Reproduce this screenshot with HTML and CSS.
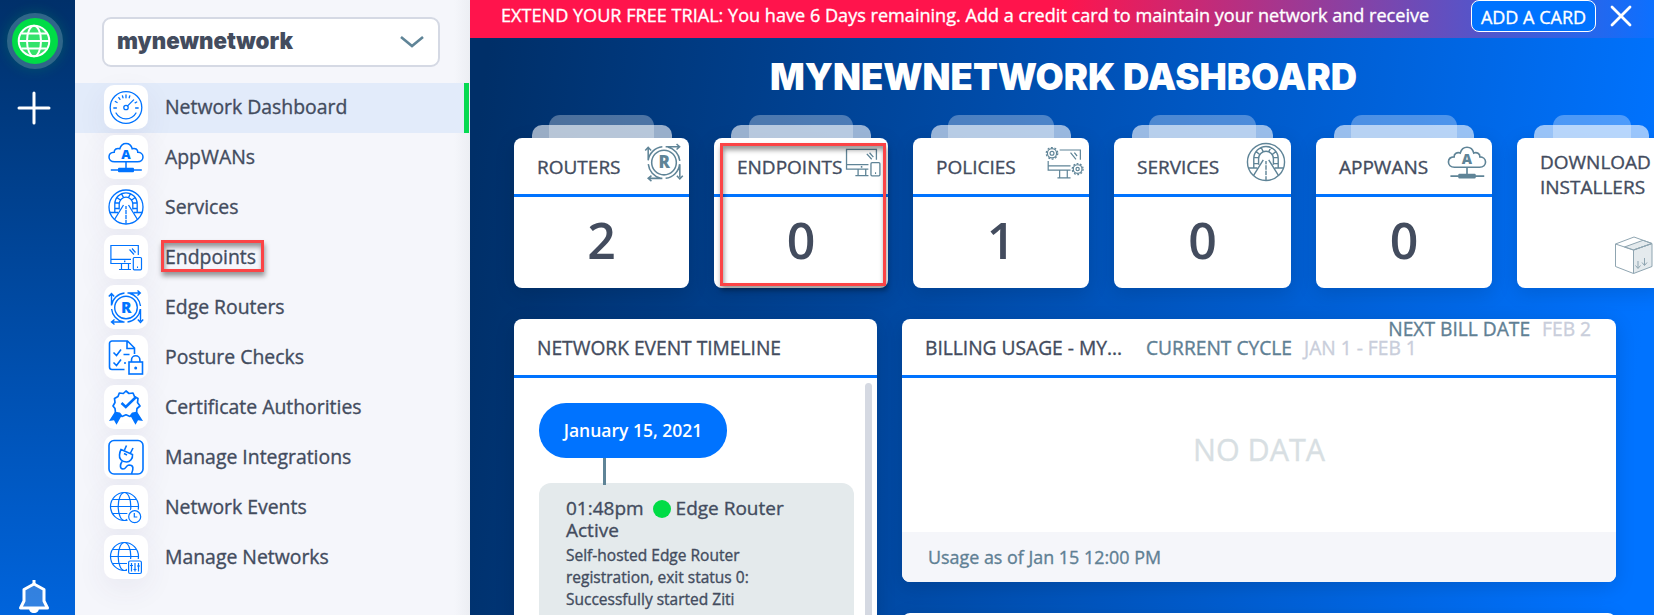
FILE: index.html
```html
<!DOCTYPE html>
<html lang="en">
<head>
<meta charset="utf-8">
<title>Network Dashboard</title>
<link rel="stylesheet" href="styles.css">
</head>
<body>
<svg class="sprite" width="0" height="0">
  <symbol id="gauge" viewBox="0 0 44 44"><g fill="none" stroke="currentColor" stroke-width="1.3" stroke-linecap="round"><circle cx="22" cy="22.5" r="15.8"/><circle cx="22" cy="22.5" r="2.2"/><path d="M23.6 20.9l6-6M12 28a11.5 11.5 0 0 0 20 0M9.8 23h2.6M31.6 23h2.6M11.3 16.5l1.8 1M14.8 12.6l1.2 1.8M18.4 10.8l.6 2M22 10v2.8M25.8 10.8l-.6 2M32.7 17l-1.6.8"/></g></symbol>
  <symbol id="cloud" viewBox="0 0 44 44"><path fill="none" stroke="currentColor" stroke-width="1.5" d="M10.5 26.8C7 26.8 5 24.500 5 22c0-3 2.400-4.600 5.200-4.700-.2-3 2.800-4.600 5.600-3.500 1-3.400 3.400-5.300 6.200-5.300s5.400 2 6.200 5.300c2.800-1.200 5.800.6 5.600 3.500 2.800 0 5.200 1.900 5.200 4.700 0 2.500-2 4.800-5.500 4.800zM22 27v6M6.800 35h31"/><rect x="14" y="32.700" width="16" height="4.500" rx="1" fill="currentColor"/><text class="glyph" x="22" y="23.500" font-size="13">A</text></symbol>
  <symbol id="tunnel" viewBox="0 0 44 44"><g fill="none" stroke="currentColor" stroke-width="1.300"><circle cx="22" cy="22" r="17"/><path d="M10.800 27V19a11.200 11.200 0 0 1 22.400 0v8M15.200 24.500V19a6.800 6.800 0 0 1 13.600 0v5.500M10.800 18h4.400M28.800 18h4.400M10.800 23.500h4.400M28.800 23.500h4.400M13 12.500l3.500 2.800M31 12.500l-3.500 2.800M17.500 8.600l2 4M26.500 8.600l-2 4M5.500 27.500h8.500M30 27.500h8.500M19.500 20L10.500 34.500M24.500 20l9 14.500M22 21v17.500"/><path stroke="#fff" stroke-width="1.600" d="M22 24v1M22 29v1M22 34v1"/></g></symbol>
  <symbol id="devices" viewBox="0 0 44 44"><g fill="none" stroke="currentColor" stroke-width="1.200"><path d="M34.300 20V10.500H6.900v18h20M7 24.400h20M17.500 28.500v6M24.500 28.500v6M15 34.500h12M25.500 14.500l4.500 5M28 13.500l3.500 4"/><rect x="29.300" y="22.500" width="8.200" height="12.300" rx="1"/><path d="M33 32.300h1M20 26.400h1.400" stroke-width="1.600"/></g></symbol>
  <symbol id="router" viewBox="0 0 44 44"><g fill="none" stroke="currentColor" stroke-width="1.400"><circle cx="22" cy="22.500" r="11.300"/><path d="M20.500 8A14.600 14.600 0 0 0 7.500 20.500V9M23.500 8H36M36.500 21A14.600 14.600 0 0 0 25.500 8.300M36.500 24v12M36.300 24A14.600 14.600 0 0 1 23.500 37M20.500 37H8M19 36.800A14.600 14.600 0 0 1 7.600 24M4.800 11.500L7.500 8.500l2.700 3M33.500 5.500L36.300 8l-2.800 2.500M33.800 34.500l2.700 3 2.700-3M10.500 34.500L7.500 37l3 2.500"/></g><text class="glyph" x="22.300" y="27.800" font-size="15.500">R</text></symbol>
  <symbol id="posture" viewBox="0 0 44 44"><g fill="none" stroke="currentColor" stroke-width="1.600"><path d="M20.500 34.500H8a2.500 2.500 0 0 1-2.500-2.500V8.500A2.500 2.500 0 0 1 8 6h15.500L30.500 13v6M23 6v7.500h7.500M9.500 17.500l3 3 4.500-6M9.500 27.500l3 3 4.500-6M19.500 19.500h6M20 28h2"/><rect x="25" y="27" width="13.500" height="12"/><path d="M27.500 27v-2a4.200 4.200 0 0 1 8.400 0v2"/></g><circle cx="31.700" cy="33" r="1.500" fill="currentColor"/></symbol>
  <symbol id="badge" viewBox="0 0 44 44"><path fill="currentColor" d="M12 25L5 36l5-.8 2.500 4.500L18 30zM32 25l7 11-5-.8-2.500 4.500L26 30z"/><path fill="#fff" stroke="currentColor" stroke-width="1.700" stroke-linejoin="round" d="M22 6l3 2.500 4-.5 1.500 3.500L34 13.500 33.500 17.500 36 21l-3 2.500-.5 4-4 .8L26 31.500l-4-1.700-4 1.700-2.500-3.200-4-.8-.5-4L9 21l2-3.500-.5-4L14 11.500 15.300 8l4 .5z"/><path fill="none" stroke="currentColor" stroke-width="2.500" d="M17.500 18l4.300 4L32 12"/></symbol>
  <symbol id="plug" viewBox="0 0 44 44"><g fill="none" stroke="currentColor" stroke-width="1.600"><rect x="5" y="5.500" width="34" height="33.500" rx="5"/><path d="M17 14.500l11.500 5c.5 4-2.500 7.500-6 7.500-5 0-7.500-3.500-7-7 .2-2.500.7-4 1.500-5.500zM20.500 15l2-4.500M26.500 18l2.500-5M20 18.500l3 1.500M18 26.500c-2 3-2.500 7 1 7.500 3.500 0 2.500-3.500 6-4 5 0 4.500 4 2.500 9"/></g></symbol>
  <symbol id="globe" viewBox="0 0 44 44"><g fill="none" stroke="currentColor" stroke-width="1.200"><circle cx="20.500" cy="21.500" r="14"/><ellipse cx="20.500" cy="21.500" rx="6.300" ry="14"/><path d="M6.500 21.500h28M9 14.500h23M9 28.500h23"/></g></symbol>
  <symbol id="events" viewBox="0 0 44 44"><use href="#globe"/><circle cx="30.700" cy="31.700" r="8" fill="#fff"/><g fill="none" stroke="currentColor" stroke-width="1.200"><circle cx="30.700" cy="31.700" r="6"/><path d="M30.300 28v4h3"/></g></symbol>
  <symbol id="tune" viewBox="0 0 44 44"><use href="#globe"/><path fill="#fff" d="M23 24h17v17H23z"/><g fill="none" stroke="currentColor" stroke-width="1.200"><rect x="24.600" y="26" width="12.800" height="12.500" rx="1.500"/><path d="M27.500 28v8.500M31 28v8.500M34.500 28v8.500M26 30.500h3M29.500 34.500h3M33 31h3"/></g></symbol>
  <symbol id="policy" viewBox="0 0 44 44"><g fill="none" stroke="currentColor" stroke-width="1.100"><path d="M18 11h19v9M7.500 21v8.500H28M7.500 25.500H28M18 29.500v7M25 29.500v7M16 36.500h12M28 13.500l5 6M31.500 13.500l2.500 3"/><circle cx="11" cy="14" r="4.200"/><circle cx="11" cy="14" r="1.800"/><circle cx="11" cy="14" r="5.300" stroke-dasharray="1.800 1.530"/><circle cx="34.500" cy="28.500" r="4"/><circle cx="34.500" cy="28.500" r="1.500"/><circle cx="34.500" cy="28.500" r="5" stroke-dasharray="1.700 1.440"/></g></symbol>
</svg>

<div class="app">
  <nav class="rail">
    <div class="rail-globe"><svg width="34" height="34" viewBox="0 0 34 34" fill="none" stroke="#fff" stroke-width="2"><circle cx="17" cy="17" r="15.300" fill="rgba(255,255,255,.2)"/><ellipse cx="17" cy="17" rx="7" ry="15.300"/><path d="M1.700 17h30.600M4.500 9.500h25M4.500 24.500h25"/></svg></div>
    <svg class="rail-plus" width="34" height="34" viewBox="0 0 34 34" stroke="#fff" stroke-width="3" stroke-linecap="round"><path d="M17 2v30M2 17h30"/></svg>
    <svg class="rail-bell" width="32" height="36" viewBox="0 0 32 36"><path fill="rgba(255,255,255,.2)" stroke="#fff" stroke-width="3" stroke-linejoin="round" d="M16 5L6 10.500V22l-3.500 7h27L26 22V10.500z"/><path fill="#fff" d="M14.500 1h3v5h-3zM11 29h10c0 3-2 5-5 5s-5-2-5-5z"/></svg>
  </nav>

  <aside class="side">
    <div class="picker">
      <svg width="180" height="40"><text class="brand" x="0" y="27" textLength="176" lengthAdjust="spacingAndGlyphs">mynewnetwork</text></svg>
      <svg width="24" height="14" viewBox="0 0 24 14" fill="none" stroke="#5f8497" stroke-width="2.600"><path d="M1 2l11 9 11-9"/></svg>
    </div>
    <ul class="menu">
      <li class="item active"><span class="tile"><svg><use href="#gauge"/></svg></span><span>Network Dashboard</span></li>
      <li class="item"><span class="tile"><svg><use href="#cloud"/></svg></span><span>AppWANs</span></li>
      <li class="item"><span class="tile"><svg><use href="#tunnel"/></svg></span><span>Services</span></li>
      <li class="item"><span class="tile"><svg><use href="#devices"/></svg></span><span>Endpoints</span><i class="mark mark-item"></i></li>
      <li class="item"><span class="tile"><svg><use href="#router"/></svg></span><span>Edge Routers</span></li>
      <li class="item"><span class="tile"><svg><use href="#posture"/></svg></span><span>Posture Checks</span></li>
      <li class="item"><span class="tile"><svg><use href="#badge"/></svg></span><span>Certificate Authorities</span></li>
      <li class="item"><span class="tile"><svg><use href="#plug"/></svg></span><span>Manage Integrations</span></li>
      <li class="item"><span class="tile"><svg><use href="#events"/></svg></span><span>Network Events</span></li>
      <li class="item"><span class="tile"><svg><use href="#tune"/></svg></span><span>Manage Networks</span></li>
    </ul>
  </aside>

  <main class="main">
    <div class="banner">
      <span class="banner-text">EXTEND YOUR FREE TRIAL: You have 6 Days remaining. Add a credit card to maintain your network and receive</span>
      <span class="banner-btn">ADD A CARD</span>
      <svg class="close" width="22" height="22" viewBox="0 0 22 22" stroke="#fff" stroke-width="2.800" stroke-linecap="round"><path d="M2 2l18 18M20 2L2 20"/></svg>
    </div>
    <svg class="title" width="600" height="44"><text class="title-text" x="6" y="36" textLength="587" lengthAdjust="spacingAndGlyphs">MYNEWNETWORK DASHBOARD</text></svg>

    <div class="cards">
      <section class="card"><header><span>ROUTERS</span><svg><use href="#router"/></svg></header><b>2</b></section>
      <section class="card"><header><span>ENDPOINTS</span><svg><use href="#devices"/></svg></header><b>0</b><i class="mark mark-card"></i></section>
      <section class="card"><header><span>POLICIES</span><svg><use href="#policy"/></svg></header><b>1</b></section>
      <section class="card"><header><span>SERVICES</span><svg><use href="#tunnel"/></svg></header><b>0</b></section>
      <section class="card"><header><span>APPWANS</span><svg><use href="#cloud"/></svg></header><b>0</b></section>
      <section class="card download"><p>DOWNLOAD INSTALLERS</p>
        <svg width="40" height="40" viewBox="0 0 40 40" fill="none" stroke="#8fa5b1" stroke-width="1"><path fill="#e4eaed" d="M19.500 14L38 7.500V30.500L19.500 37.500zM10.500 11L29 4.300l9 3.200L19.500 14z"/><path d="M1.500 8L20 1l18 6.500L19.500 14zM1.500 8V30.500l18 7M24 25v7M21.500 29.500l2.500 3 2.500-3M30.500 22v7M28 26.500l2.500 3 2.500-3"/></svg></section>
    </div>

    <div class="panels">
      <section class="panel timeline">
        <header>NETWORK EVENT TIMELINE</header>
        <div class="feed">
          <div class="events">
            <div class="day">January 15, 2021</div>
            <div class="link"></div>
            <article class="event">
              <h3>01:48pm <i class="dot"></i>Edge Router<br>Active</h3>
              <p>Self-hosted Edge Router<br>registration, exit status 0:<br>Successfully started Ziti</p>
            </article>
          </div>
          <div class="scroll"></div>
        </div>
      </section>
      <div class="right">
        <section class="panel billing">
          <header><span class="b-title">BILLING USAGE - MY...</span><span class="b-label">CURRENT CYCLE</span><span class="b-val">JAN 1 - FEB 1</span><span class="next"><span class="b-label">NEXT BILL DATE</span><span class="b-val">FEB 2</span></span></header>
          <div class="empty">NO DATA</div>
          <footer>Usage as of Jan 15 12:00 PM</footer>
        </section>
        <section class="panel following"></section>
      </div>
    </div>
  </main>
</div>
</body>
</html>
```
FILE: styles.css
```css
* { box-sizing: border-box; }
body { margin: 0; height: 615px; overflow: hidden; font-family: "Open Sans", "Noto Sans", sans-serif; font-size: 20px; color: #434c5e; -webkit-text-stroke: .35px currentColor; }
.sprite { display: none; }
.glyph { font-family: "Open Sans", sans-serif; font-weight: 800; text-anchor: middle; fill: currentColor; -webkit-text-stroke: 0; }
.app { display: flex; height: 615px; }

.rail { width: 75px; height: 615px; flex: none; background: linear-gradient(#00306a, #0064dc); display: flex; flex-direction: column; padding: 13px 0 0 7px; }
.rail-globe { width: 56px; height: 56px; border-radius: 50%; border: 5px solid #2f6689; background: #00dc46; display: flex; align-items: center; justify-content: center; padding-right: 2px; box-shadow: 0 0 14px rgba(0, 220, 70, .2); }
.rail-plus { margin: 22px 0 0 10px; }
.rail-bell { margin: auto 0 0 11px; }

.side { width: 395px; flex: none; background: linear-gradient(90deg, #f5f6fb 96%, #eceef3); padding-top: 17px; }
.picker { margin: 0 30px 16px 27px; height: 50px; border: 2px solid #d5d9e4; border-radius: 9px; background: #fff; display: flex; align-items: center; justify-content: space-between; padding: 0 14px 0 13px; }
.brand { font: 900 23px Inter, sans-serif; fill: #434c5e; -webkit-text-stroke: 0; }
.menu { list-style: none; margin: 0; padding: 0; }
.item { position: relative; height: 50px; margin-right: 1px; padding: 0 0 2px 29px; display: flex; align-items: center; gap: 17px; font-size: 19.400px; }
.item > span + span { padding-bottom: 2px; }
.item.active { background: #e2ebfa; border-right: 5px solid #06da52; }
.tile { width: 44px; height: 44px; border-radius: 10px; background: #fff; color: #0073ff; box-shadow: 0 10px 30px rgba(70, 60, 120, .07); }
.tile svg { display: block; width: 44px; height: 44px; }
.mark { position: absolute; border: 3px solid #fb4446; box-shadow: 1px 4px 5px rgba(0, 0, 0, .4), inset 1px 4px 5px rgba(0, 0, 0, .4); }
.mark-item { left: 86px; top: 7px; width: 103px; height: 32px; }
.mark-card { left: 6px; top: 5px; width: 166px; height: 143px; }

.main { flex: 1; min-width: 0; overflow: hidden; background: linear-gradient(98deg, #002f68 2%, #0050b3 48%, #0073ff 96%); }
.banner { height: 38px; display: flex; align-items: flex-start; color: #fff; padding-left: 31px; background: linear-gradient(90deg, #ff144c 50%, #0c70ff 100%); }
.banner-text { width: 970px; font-size: 18.100px; line-height: 31px; white-space: nowrap; }
.banner-btn { width: 125px; height: 32px; border: 1.500px solid #fff; border-radius: 8px; background: #0073ff; font-size: 18px; line-height: 32px; text-align: center; white-space: nowrap; }
.close { margin: 5px 0 0 14px; }
.title { display: block; margin: 16px 0 0 294px; }
.title-text { font: 900 37px Inter, sans-serif; fill: #fff; -webkit-text-stroke: 0; }

.cards { display: grid; grid-template-columns: 175px 174px 176px 177px 176px 148px; column-gap: 25px; margin: 40px 0 0 44px; }
.card { position: relative; height: 150px; border-radius: 8px; background: #fff; box-shadow: 0 5px 20px rgba(0, 0, 0, .13); text-align: center; }
.card::before { content: ""; position: absolute; left: 20%; width: 60%; top: -23px; height: 23px; border-radius: 11px 11px 0 0; background: rgba(255, 255, 255, .3); }
.card::after { content: ""; position: absolute; left: 10%; width: 80%; top: -13px; height: 13px; border-radius: 10px 10px 0 0; background: rgba(255, 255, 255, .6); }
.card header { height: 59px; border-bottom: 3px solid #0073ff; display: flex; justify-content: space-between; padding-left: 23px; }
.card header span { line-height: 58px; font-size: 19px; }
.card header svg { width: 48px; height: 48px; flex: none; margin-left: -20px; margin-right: 1px; color: #5f8497; }
.card b { display: block; font-size: 50px; font-weight: 600; line-height: 87px; -webkit-text-stroke: 0; }
.card.download::before { left: 24%; width: 53%; }
.card.download::after { left: 11.500%; width: 78%; }
.download p { margin: 0; padding: 12px 0 0 23px; font-size: 19px; line-height: 25px; text-align: left; width: 100px; }
.download svg { display: block; margin: 36px 0 0 97px; }

.panels { display: flex; gap: 25px; margin: 31px 0 0 44px; }
.panel { background: #fff; border-radius: 8px; box-shadow: 0 5px 20px rgba(0, 0, 0, .13); }
.panel > header { height: 59px; border-bottom: 3px solid #0073ff; line-height: 57px; padding-left: 23px; font-size: 19.200px; white-space: nowrap; }
.timeline { width: 363px; height: 320px; flex: none; }
.feed { display: flex; padding: 5px 5px 0 25px; justify-content: space-between; }
.scroll { width: 7px; height: 260px; border-radius: 4px; background: #d5d9e2; }
.events { width: 315px; padding-top: 20px; }
.day { width: 188px; height: 55px; border-radius: 27px; background: #0073ff; color: #fff; font-size: 17.500px; font-weight: 600; line-height: 55px; text-align: center; -webkit-text-stroke: 0; }
.link { width: 3px; height: 27px; margin: 0 0 -2px 64px; background: #5f8497; position: relative; z-index: 1; }
.event { height: 160px; border-radius: 12px; background: #e4eaec; padding: 14px 0 0 27px; }
.event h3 { margin: 0; font-size: 19px; font-weight: 400; line-height: 22px; }
.event p { margin: 3px 0 0; font-size: 15.500px; line-height: 22px; }
.dot { display: inline-block; width: 18px; height: 18px; border-radius: 50%; background: #00dc46; margin: 0 5px 0 4px; vertical-align: -3px; }
.right { width: 714px; flex: none; }
.billing { height: 263px; display: flex; flex-direction: column; overflow: hidden; }
.billing > header { display: flex; position: relative; }
.b-title { width: 221px; }
.b-label { color: #5f8094; margin-right: 12px; }
.b-val { color: #c9cedb; }
.next { position: absolute; right: 25px; top: -19px; display: flex; }
.empty { flex: 1; display: flex; align-items: center; justify-content: center; padding-bottom: 12px; font-size: 30.500px; color: #d8dfe3; }
.billing footer { height: 50px; background: #f5f6fa; padding-left: 26px; color: #5f8094; font-size: 17.900px; line-height: 50px; }
.following { margin-top: 31px; height: 60px; }
```
